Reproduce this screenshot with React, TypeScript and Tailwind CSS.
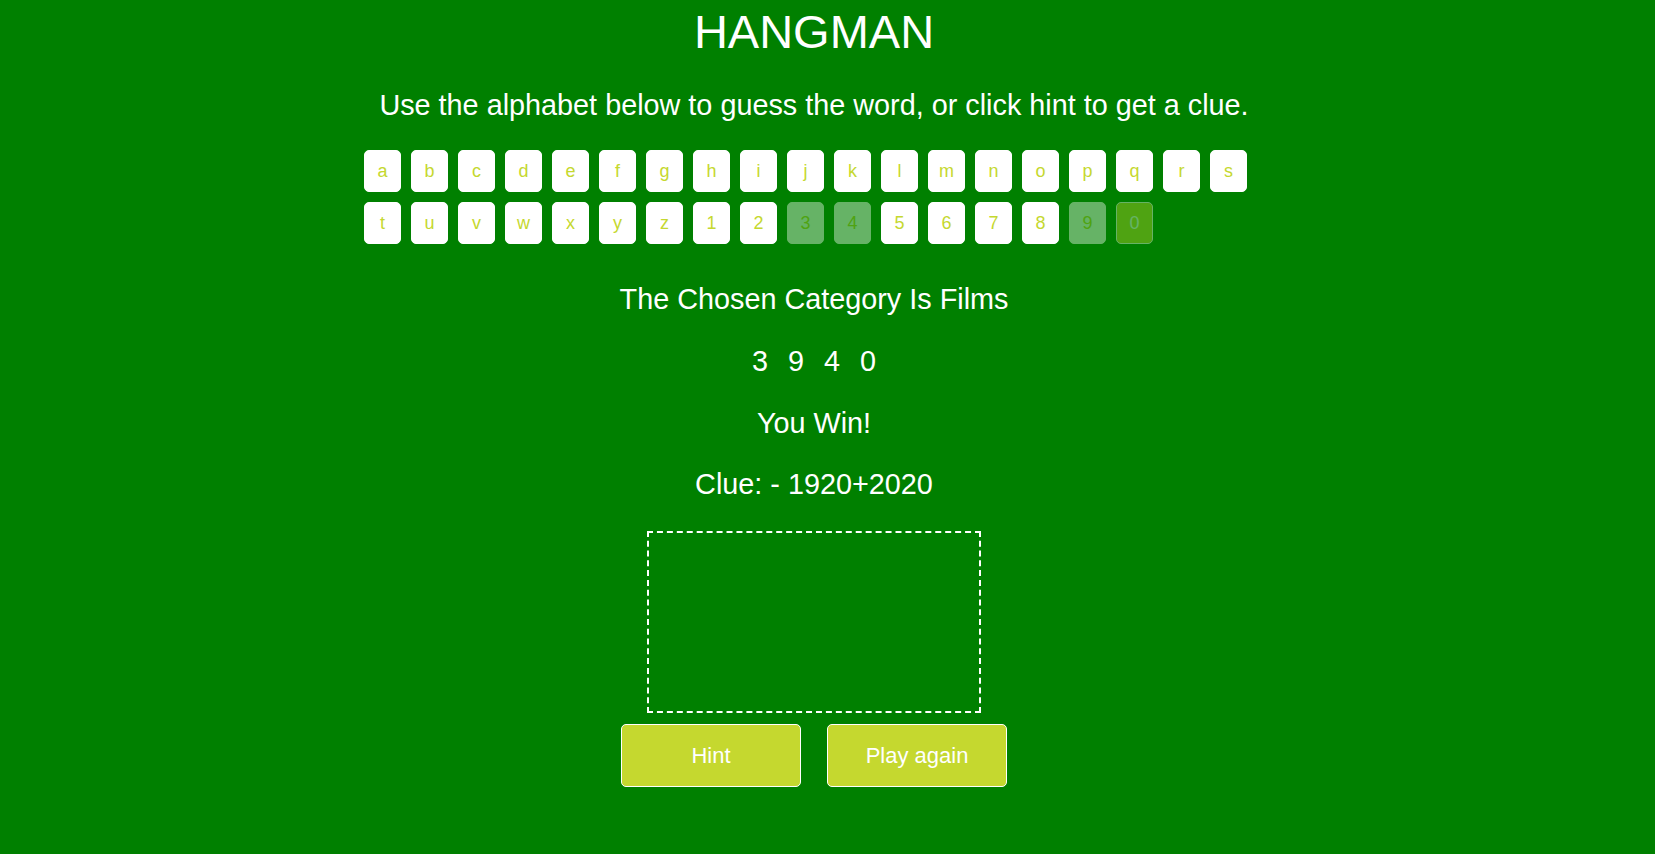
import React from "react";

const letters = "abcdefghijklmnopqrstuvwxyz1234567890".split("");
const used = ["3", "4", "9"];
const hovered = "0";
const word = ["3", "9", "4", "0"];

export default function App() {
  return (
    <div className="min-h-screen bg-[#008000] pr-[27px] text-center font-['Liberation_Sans',Arial,sans-serif] text-white">
      <h1 className="pt-[5px] text-[47px] leading-[54px]">HANGMAN</h1>
      <p className="mt-[30px] text-[28.8px] leading-[33px]">
        Use the alphabet below to guess the word, or click hint to get a clue.
      </p>

      {/* alphabet */}
      <ul className="mx-auto mt-[28px] flex w-[900px] flex-wrap">
        {letters.map((l) => {
          let cls = "border-white bg-white text-[#c5d82f]";
          if (used.includes(l)) cls = "border-white bg-white text-[#c5d82f] opacity-40";
          if (l === hovered) cls = "border-white bg-[#c5d82f] text-white opacity-40";
          return (
            <li
              key={l}
              className={
                "mr-[10px] mb-[10px] h-[42px] w-[37px] rounded-[5px] border pt-[10px] text-[18px] leading-[21px] " + cls
              }
            >
              {l}
            </li>
          );
        })}
      </ul>

      <p className="mt-[29px] text-[28.8px] leading-[33px]">The Chosen Category Is Films</p>

      <ul className="mt-[29px] flex justify-center text-[28.8px] leading-[33px]">
        {word.map((c, i) => (
          <li key={i} className="px-[10px]">
            {c}
          </li>
        ))}
      </ul>

      <p className="mt-[29px] text-[28.8px] leading-[33px]">You Win!</p>
      <p className="mt-[28px] text-[28.8px] leading-[33px]">Clue: - 1920+2020</p>

      {/* stickman canvas */}
      <div className="mx-auto mt-[30px] h-[182px] w-[334px] border-2 border-dashed border-white" />

      <div className="mt-[11px] flex justify-center gap-[26px]">
        <button className="h-[63px] w-[180px] rounded-[5px] border border-white bg-[#c5d82f] text-[22px] text-white">
          Hint
        </button>
        <button className="h-[63px] w-[180px] rounded-[5px] border border-white bg-[#c5d82f] text-[22px] text-white">
          Play again
        </button>
      </div>
    </div>
  );
}
